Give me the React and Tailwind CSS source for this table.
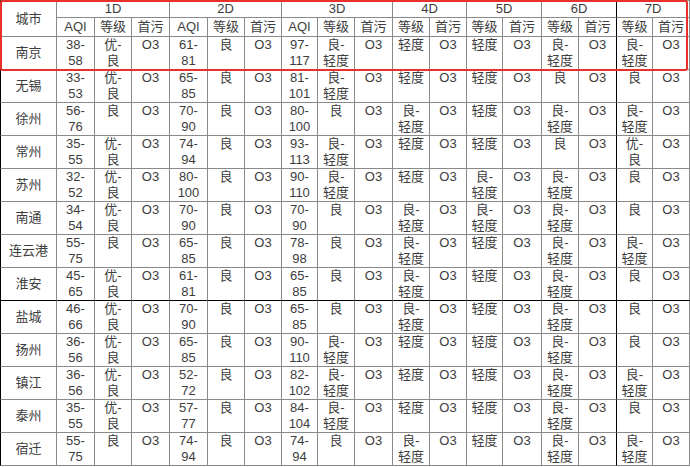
const days = ['1D', '2D', '3D', '4D', '5D', '6D', '7D'];

// city, then [aqi, level] for 1D-3D, then level only for 4D-7D
const rows = [
  ['南京', ['38-58', '优-良'], ['61-81', '良'], ['97-117', '良-轻度'], '轻度', '轻度', '良-轻度', '良-轻度'],
  ['无锡', ['33-53', '优-良'], ['65-85', '良'], ['81-101', '良-轻度'], '轻度', '轻度', '良', '良'],
  ['徐州', ['56-76', '良'], ['70-90', '良'], ['80-100', '良'], '良-轻度', '轻度', '良-轻度', '良-轻度'],
  ['常州', ['35-55', '优-良'], ['74-94', '良'], ['93-113', '良-轻度'], '轻度', '轻度', '良', '优-良'],
  ['苏州', ['32-52', '优-良'], ['80-100', '良'], ['90-110', '良-轻度'], '轻度', '良-轻度', '良-轻度', '良'],
  ['南通', ['34-54', '优-良'], ['70-90', '良'], ['70-90', '良'], '良-轻度', '良-轻度', '良-轻度', '良'],
  ['连云港', ['55-75', '良'], ['65-85', '良'], ['78-98', '良'], '良-轻度', '轻度', '良-轻度', '良-轻度'],
  ['淮安', ['45-65', '优-良'], ['61-81', '良'], ['65-85', '良'], '良-轻度', '轻度', '良-轻度', '良'],
  ['盐城', ['46-66', '优-良'], ['70-90', '良'], ['65-85', '良'], '良-轻度', '轻度', '良-轻度', '良'],
  ['扬州', ['36-56', '优-良'], ['65-85', '良'], ['90-110', '良-轻度'], '轻度', '轻度', '良-轻度', '良'],
  ['镇江', ['36-56', '优-良'], ['52-72', '良'], ['82-102', '良-轻度'], '轻度', '轻度', '良-轻度', '良-轻度'],
  ['泰州', ['35-55', '优-良'], ['57-77', '良'], ['84-104', '良-轻度'], '轻度', '轻度', '良-轻度', '良'],
  ['宿迁', ['55-75', '良'], ['74-94', '良'], ['74-94', '良'], '良-轻度', '轻度', '良-轻度', '良-轻度'],
];

// split "38-58" -> ["38-", "58"]
function Split({ v }) {
  const i = v.indexOf('-');
  if (i < 0) return <span className="block">{v}</span>;
  return (
    <>
      <span className="block">{v.slice(0, i + 1)}</span>
      <span className="block">{v.slice(i + 1)}</span>
    </>
  );
}

const line = 'border-r border-b border-[#8a8a8a]';

export default function App() {
  return (
    <div
      className="relative w-[690px] h-[467px] bg-white overflow-hidden text-[13px] leading-4 text-[#3d3d3d]"
      style={{ fontFamily: '"Liberation Sans", "Noto Sans CJK SC", sans-serif' }}
    >
      <div className="grid w-[690px] grid-cols-[57px_38px_37px_38px_38px_37px_37px_36px_37px_38px_37px_37px_36px_39px_37px_38px_36px_37px] grid-rows-[18px_19px_repeat(13,33px)]">
        {/* header row 1 */}
        <div className={`${line} border-t border-l border-l-black row-span-2 grid place-items-center`}>城市</div>
        {days.map((d, i) => (
          <div
            key={d}
            className={`${line} border-t ${i < 3 ? 'col-span-3' : 'col-span-2'} ${i === 5 ? 'border-r-black' : ''} grid place-items-center`}
          >
            {d}
          </div>
        ))}

        {/* header row 2 */}
        {days.map((d, i) => (
          <div key={d} className="contents">
            {i < 3 && <div className={`${line} grid place-items-center`}>AQI</div>}
            <div className={`${line} grid place-items-center`}>等级</div>
            <div className={`${line} ${i === 5 ? 'border-r-black' : ''} grid place-items-center`}>首污</div>
          </div>
        ))}

        {/* data rows */}
        {rows.map((r) => {
          const bottom = r[0] === '淮安' ? 'border-b-black' : '';
          return (
            <div key={r[0]} className="contents">
              <div className={`${line} ${bottom} border-l border-l-black grid place-items-center`}>{r[0]}</div>
              {r.slice(1).map((c, ci) => (
                <div key={ci} className="contents">
                  {ci < 3 && (
                    <div className={`${line} ${bottom} text-center`}>
                      <Split v={c[0]} />
                    </div>
                  )}
                  <div className={`${line} ${bottom} text-center`}>
                    <Split v={ci < 3 ? c[1] : c} />
                  </div>
                  <div className={`${line} ${bottom} ${ci === 5 ? 'border-r-black' : ''} text-center`}>O3</div>
                </div>
              ))}
            </div>
          );
        })}
      </div>

      {/* red highlight around header + 南京 */}
      <div className="absolute left-0 top-0 w-[688px] h-[71px] border-2 border-[#e8302c] rounded-[3px] pointer-events-none" />
    </div>
  );
}
